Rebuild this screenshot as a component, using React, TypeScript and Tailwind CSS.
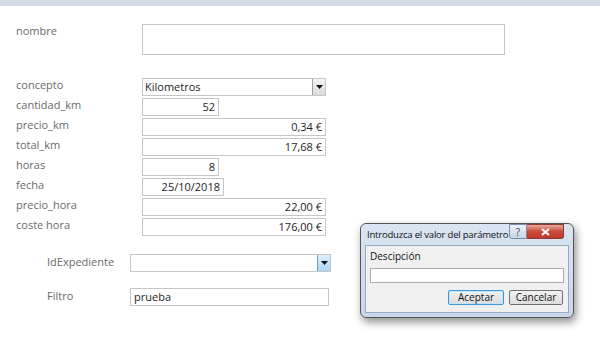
const font = { fontFamily: '"Open Sans", "Noto Sans", sans-serif' };

function Field({ w, value = "", align = "right" }: { w: string; value?: string; align?: "left" | "right" }) {
  return (
    <div
      className={`${w} h-[18px] border border-[#c6c6c6] bg-white text-[11px] leading-[16px] text-[#1e1e1e] px-[3px] ${
        align === "right" ? "text-right" : "text-left"
      }`}
    >
      {value}
    </div>
  );
}

function Combo({ w, value = "", blue = false }: { w: string; value?: string; blue?: boolean }) {
  return (
    <div className={`${w} h-[18px] border border-[#c6c6c6] bg-white flex items-stretch`}>
      <div className="flex-1 text-[11px] leading-[16px] text-[#1e1e1e] px-[2px]">{value}</div>
      <div
        className={`w-[13px] border-l flex items-center justify-center ${
          blue ? "bg-gradient-to-b from-[#dff0fc] to-[#a9d6f5] border-[#6e9ec6]" : "bg-gradient-to-b from-[#f4f4f4] to-[#dcdcdc] border-[#a0a0a0]"
        }`}
      >
        <svg width="7" height="4" viewBox="0 0 7 4">
          <path d="M0 0h7L3.5 4z" fill="#111" />
        </svg>
      </div>
    </div>
  );
}

const rows: { label: string; w: string; value: string; combo?: boolean }[] = [
  { label: "concepto", w: "w-[184px]", value: "Kilometros", combo: true },
  { label: "cantidad_km", w: "w-[77px]", value: "52" },
  { label: "precio_km", w: "w-[184px]", value: "0,34 €" },
  { label: "total_km", w: "w-[184px]", value: "17,68 €" },
  { label: "horas", w: "w-[77px]", value: "8" },
  { label: "fecha", w: "w-[82px]", value: "25/10/2018" },
  { label: "precio_hora", w: "w-[184px]", value: "22,00 €" },
  { label: "coste hora", w: "w-[184px]", value: "176,00 €" },
];

export default function App() {
  return (
    <div className="relative w-[600px] h-[360px] bg-white overflow-hidden" style={font}>
      <div className="h-[6px] bg-[#d5dce6]" />

      {/* nombre */}
      <div className="flex pl-[16px] pt-[18px]">
        <div className="w-[126px] text-[11px] leading-[14px] text-[#6a6a6a]">nombre</div>
        <div className="w-[363px] h-[31px] border border-[#c6c6c6] bg-white" />
      </div>

      {/* main rows */}
      <div className="flex flex-col gap-[2px] pl-[16px] pt-[23px]">
        {rows.map((r) => (
          <div key={r.label} className="flex items-center h-[18px]">
            <div className="w-[126px] text-[11px] text-[#6a6a6a] -mt-[3px]">{r.label}</div>
            {r.combo ? <Combo w={r.w} value={r.value} /> : <Field w={r.w} value={r.value} />}
          </div>
        ))}
      </div>

      {/* bottom section */}
      <div className="flex flex-col gap-[16px] pl-[47px] pt-[18px]">
        <div className="flex items-center h-[18px]">
          <div className="w-[83px] text-[11px] text-[#6a6a6a] -mt-[2px]">IdExpediente</div>
          <Combo w="w-[201px]" blue />
        </div>
        <div className="flex items-center h-[18px]">
          <div className="w-[83px] text-[11px] text-[#6a6a6a] -mt-[2px]">Filtro</div>
          <Field w="w-[199px]" value="prueba" align="left" />
        </div>
      </div>

      {/* dialog */}
      <div className="absolute left-[360px] top-[223px] w-[214px] h-[95px] rounded-[6px] border border-[#555] bg-gradient-to-b from-[#dae5f2] to-[#c8d6e8] shadow-[2px_4px_8px_rgba(0,0,0,0.45)] flex flex-col px-[4px] pb-[4px]">
        <div className="flex items-start h-[21px]">
          <div className="flex-1 overflow-hidden whitespace-nowrap text-[9.5px] tracking-[-0.2px] text-[#111] pl-[2px] pt-[4px] leading-[13px]">
            Introduzca el valor del parámetro
          </div>
          <div className="flex mr-[5px]">
            <div className="w-[18px] h-[15px] border border-[#7b8ea8] rounded-bl-[3px] bg-gradient-to-b from-[#eef3f9] to-[#c5d4e6] flex items-center justify-center text-[10px] leading-none text-[#444]">
              ?
            </div>
            <div className="w-[37px] h-[15px] border border-[#8b3a32] border-l-0 rounded-br-[3px] bg-gradient-to-b from-[#e9a99c] via-[#c9493a] to-[#c23a2b] flex items-center justify-center">
              <svg width="9" height="8" viewBox="0 0 9 8">
                <path d="M1 1l7 6M8 1L1 7" stroke="#fff" strokeWidth="2" />
              </svg>
            </div>
          </div>
        </div>
        <div className="flex-1 border border-[#9aa9bd] bg-[#f0f0f0] flex flex-col px-[4px]">
          <div className="text-[10px] text-[#111] pt-[3px] leading-[14px]">Descipción</div>
          <div className="h-[15px] border border-[#acacac] bg-white mt-[5px]" />
          <div className="flex justify-end gap-[5px] mt-[7px] pr-[1px]">
            <div className="w-[56px] h-[15px] rounded-[2px] border border-[#3c9ad8] bg-gradient-to-b from-[#f2f2f2] to-[#dcdcdc] text-[10px] leading-[13px] text-center text-[#111] shadow-[inset_0_0_0_1px_#bfe4fb]">
              Aceptar
            </div>
            <div className="w-[54px] h-[15px] rounded-[2px] border border-[#707070] bg-gradient-to-b from-[#f2f2f2] to-[#dcdcdc] text-[10px] leading-[13px] text-center text-[#111]">
              Cancelar
            </div>
          </div>
        </div>
      </div>
    </div>
  );
}
